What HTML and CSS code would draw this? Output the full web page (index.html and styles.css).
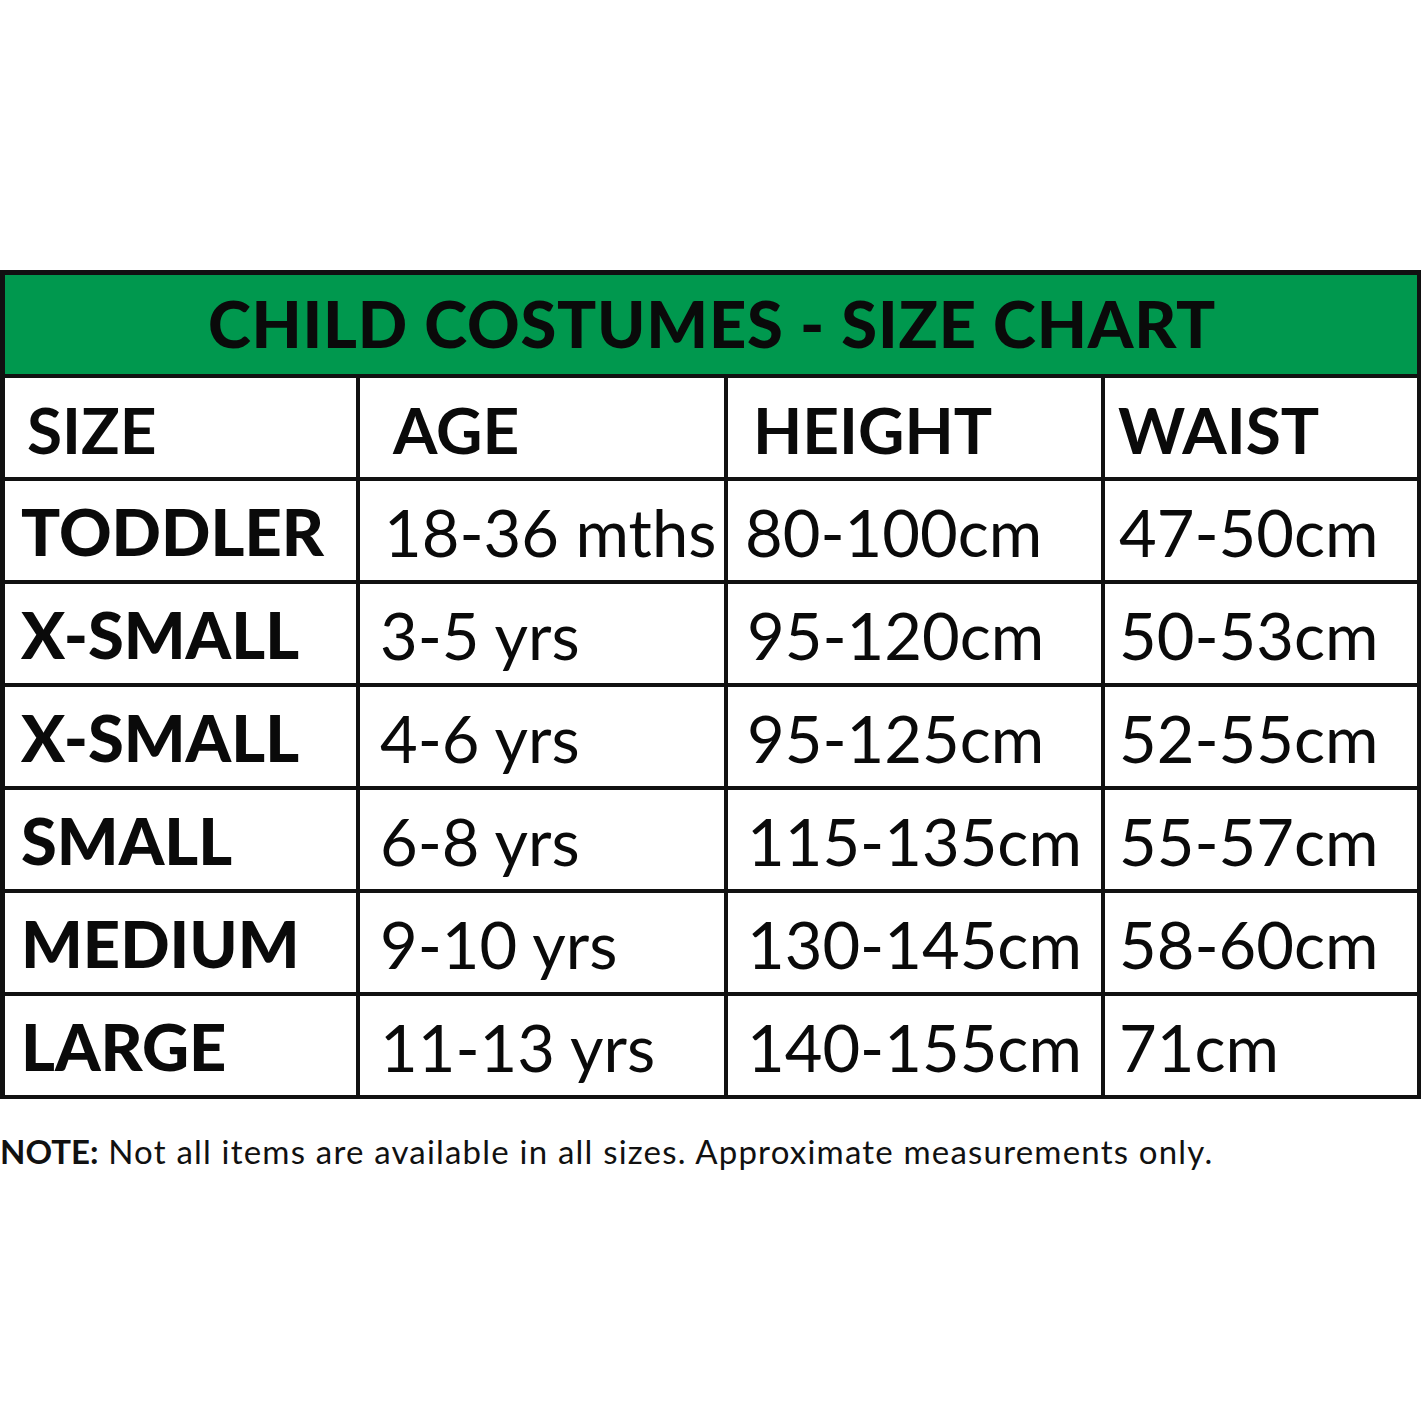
FILE: index.html
```html
<!DOCTYPE html>
<html>
<head>
<meta charset="utf-8">
<link rel="stylesheet" href="styles.css">
</head>
<body>
<div class="page">
  <div class="chart">
    <div class="title">CHILD COSTUMES - SIZE CHART</div>
    <div class="cell head c1">SIZE</div>
    <div class="cell head c2">AGE</div>
    <div class="cell head c3">HEIGHT</div>
    <div class="cell head c4">WAIST</div>

    <div class="cell size c1">TODDLER</div>
    <div class="cell val c2 first">18-36 mths</div>
    <div class="cell val c3 first">80-100cm</div>
    <div class="cell val c4">47-50cm</div>

    <div class="cell size c1">X-SMALL</div>
    <div class="cell val c2">3-5 yrs</div>
    <div class="cell val c3">95-120cm</div>
    <div class="cell val c4">50-53cm</div>

    <div class="cell size c1">X-SMALL</div>
    <div class="cell val c2">4-6 yrs</div>
    <div class="cell val c3">95-125cm</div>
    <div class="cell val c4">52-55cm</div>

    <div class="cell size c1">SMALL</div>
    <div class="cell val c2">6-8 yrs</div>
    <div class="cell val c3">115-135cm</div>
    <div class="cell val c4">55-57cm</div>

    <div class="cell size c1">MEDIUM</div>
    <div class="cell val c2">9-10 yrs</div>
    <div class="cell val c3">130-145cm</div>
    <div class="cell val c4">58-60cm</div>

    <div class="cell size c1">LARGE</div>
    <div class="cell val c2">11-13 yrs</div>
    <div class="cell val c3">140-155cm</div>
    <div class="cell val c4">71cm</div>
  </div>
  <p class="note"><strong>NOTE:</strong> Not all items are available in all sizes. Approximate measurements only.</p>
</div>
</body>
</html>
```
FILE: styles.css
```css
html, body {
  margin: 0;
  padding: 0;
  background: #ffffff;
}

.page {
  padding-top: 270px;
  font-family: Lato, "Liberation Sans", sans-serif;
  color: #0a0a0a;
}

.chart {
  width: 1421px;
  box-sizing: border-box;
  background: #111;
  padding: 5px 4px 4px 5px;
  display: grid;
  grid-template-columns: 351px 364px 373px 312px;
  grid-template-rows: 99px repeat(7, 99px);
  gap: 4px;
}

.title {
  grid-column: 1 / -1;
  background: #00984e;
  display: flex;
  align-items: center;
  justify-content: center;
  font-weight: 900;
  font-size: 65px;
  letter-spacing: 0.8px;
  padding-left: 2px;
  padding-bottom: 3px;
}

.cell {
  background: #fff;
  display: flex;
  align-items: center;
  white-space: nowrap;
}

.head {
  font-weight: 700;
  font-size: 64px;
  padding-top: 4px;
}

.head.c1 { padding-left: 22px; }
.head.c2 { padding-left: 33px; }
.head.c3 { padding-left: 25px; }
.head.c4 { padding-left: 13px; }

.size {
  font-weight: 900;
  font-size: 65px;
  padding-left: 16px;
}

.val {
  font-weight: 400;
  font-size: 65px;
  padding-top: 2px;
}

.val.c2 { padding-left: 20px; }
.val.c2.first { padding-left: 24px; }
.val.c3 { padding-left: 19px; }
.val.c3.first { padding-left: 17px; }
.val.c4 { padding-left: 14px; }

.note {
  margin: 32px 0 0 0;
  font-size: 33px;
  letter-spacing: 1.2px;
  font-weight: 400;
  color: #111;
}

.note strong {
  font-weight: 700;
  letter-spacing: 0;
}
```
